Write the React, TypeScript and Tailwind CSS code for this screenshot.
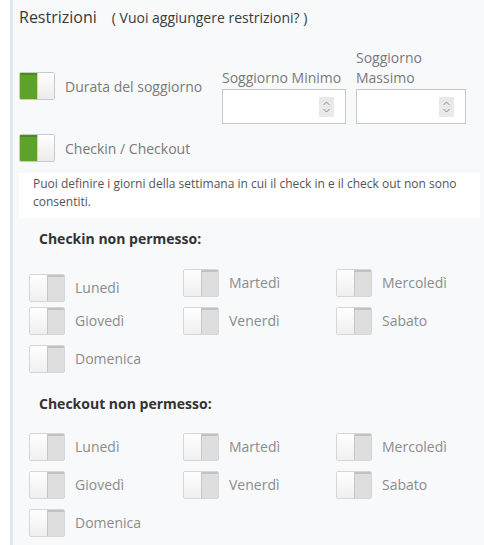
import React from "react";

const font = { fontFamily: '"Open Sans", "Liberation Sans", sans-serif' };

const Toggle = ({ on = false }: { on?: boolean }) => {
  if (on) {
    return (
      <div className="flex h-[28px] w-[36px] shrink-0 overflow-hidden rounded-[2px] border border-[#c9c9c9]">
        <div className="w-[17px] bg-[#5da22b] shadow-[inset_0_2px_0_#4b8c20]" />
        <div className="flex-1 border-l border-[#cfcfcf] bg-linear-to-b from-white to-[#ebebeb]" />
      </div>
    );
  }
  return (
    <div className="flex h-[28px] w-[36px] shrink-0 overflow-hidden rounded-[2px] border border-[#d6d6d6]">
      <div className="w-[18px] border-r border-[#c6c6c6] bg-linear-to-b from-white to-[#efefef]" />
      <div className="flex-1 bg-[#dedede] shadow-[inset_0_2px_0_#c2c2c2]" />
    </div>
  );
};

const Spinner = () => (
  <div className="flex h-[20px] w-[15px] flex-col items-center justify-center bg-[#e9e9e9]">
    <svg width="9" height="14" viewBox="0 0 9 14" fill="none" stroke="#8a8a8a" strokeWidth="1">
      <path d="M1.5 5 L4.5 2 L7.5 5" />
      <path d="M1.5 9 L4.5 12 L7.5 9" />
    </svg>
  </div>
);

const NumberField = ({ label, width, nowrap }: { label: string; width: string; nowrap?: boolean }) => (
  <div className={`flex flex-col ${width}`}>
    <span className={`mb-[1px] text-[14px] leading-[20px] text-[#7a7a7a] ${nowrap ? "whitespace-nowrap" : ""}`}>{label}</span>
    <div className="flex h-[35px] items-center justify-end border border-[#c8c8c8] bg-white pr-[11px]">
      <Spinner />
    </div>
  </div>
);

const Day = ({ name, className = "" }: { name: string; className?: string }) => (
  <div className={`flex items-center gap-[10px] ${className}`}>
    <Toggle />
    <span className="text-[14px] leading-[20px] text-[#8c8c8c]">{name}</span>
  </div>
);

const DayGrid = ({ shiftFirst }: { shiftFirst?: boolean }) => (
  <div className="grid grid-cols-[154px_153px_1fr] gap-y-[10px] pl-[10px]">
    <Day name="Lunedì" className={shiftFirst ? "mt-[5px] -mb-[5px]" : ""} />
    <Day name="Martedì" />
    <Day name="Mercoledì" />
    <Day name="Giovedì" />
    <Day name="Venerdì" />
    <Day name="Sabato" />
    <Day name="Domenica" />
  </div>
);

export default function App() {
  return (
    <div className="min-h-screen bg-white" style={font}>
      <div className="ml-[10px] min-h-[545px] border-l-[3px] border-[#dfe9f0] bg-[#f7f9fb] pl-[6px] pr-[4px]">
        <div className="flex h-[34px] items-center">
          <span className="text-[16px] text-[#3a3a3a]">Restrizioni</span>
          <span className="ml-[15px] text-[14px] text-[#3a3a3a]">( Vuoi aggiungere restrizioni? )</span>
        </div>

        <div className="mt-[14px] flex items-end">
          <div className="mb-[24px] flex w-[203px] items-center gap-[10px]">
            <Toggle on />
            <span className="text-[14px] text-[#7a7a7a]">Durata del soggiorno</span>
          </div>
          <NumberField label="Soggiorno Minimo" width="w-[124px]" nowrap />
          <div className="w-[10px]" />
          <NumberField label="Soggiorno Massimo" width="w-[110px]" />
        </div>

        <div className="mt-[10px] flex items-center gap-[10px]">
          <Toggle on />
          <span className="text-[14px] text-[#7a7a7a]">Checkin / Checkout</span>
        </div>

        <div className="mt-[11px] bg-white pb-[7px] pl-[14px] pr-[10px] pt-[2px] text-[12px] leading-[18px] text-[#555]">
          Puoi definire i giorni della settimana in cui il check in e il check out non sono consentiti.
        </div>

        <div className="mt-[11px] pl-[20px] text-[14px] font-bold leading-[20px] text-[#333]">Checkin non permesso:</div>
        <div className="mt-[20px]">
          <DayGrid shiftFirst />
        </div>

        <div className="mt-[21px] pl-[20px] text-[14px] font-bold leading-[20px] text-[#333]">Checkout non permesso:</div>
        <div className="mt-[19px]">
          <DayGrid />
        </div>
      </div>
    </div>
  );
}
